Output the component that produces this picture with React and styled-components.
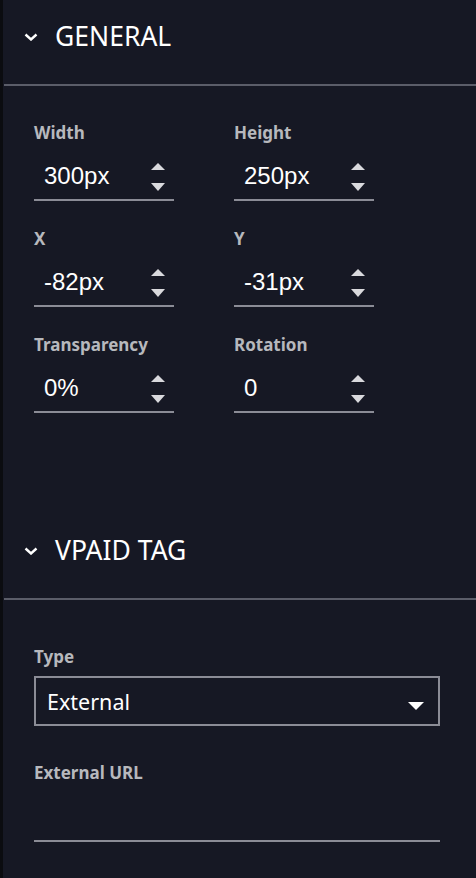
import React from 'react';
import styled, { createGlobalStyle } from 'styled-components';

const GlobalStyle = createGlobalStyle`
	html, body {
		margin: 0;
		padding: 0;
		background: #161824;
	}
	* {
		box-sizing: border-box;
	}
`;

const Panel = styled.div`
	min-height: 878px;
	width: 476px;
	background: #161824;
	border-left: 3px solid #0b0c10;
	display: flex;
	flex-direction: column;
	font-family: 'Noto Sans', 'Open Sans', sans-serif;
`;

const SectionHeader = styled.div`
	height: 72px;
	display: flex;
	align-items: center;
	padding-left: 21px;
	margin-top: ${props => props.offset || 0}px;
	margin-bottom: 12px;
	color: #ffffff;
	font-size: 26.5px;
	font-weight: 400;
`;

const Chevron = styled.svg`
	width: 14px;
	height: 8px;
	margin-right: 17px;
	margin-top: 2px;
`;

const Divider = styled.div`
	height: 2px;
	background: #5b5d69;
	margin-left: 1px;
`;

const FieldGrid = styled.div`
	display: grid;
	grid-template-columns: 140px 140px;
	column-gap: 60px;
	row-gap: 27px;
	padding: 36px 0 0 31px;
`;

const Stack = styled.div`
	display: flex;
	flex-direction: column;
	padding: ${props => props.top}px 36px 0 31px;
`;

const Label = styled.div`
	font-size: 17px;
	line-height: 22px;
	font-weight: 700;
	color: #b7b8bd;
	margin-top: ${props => props.gap || 0}px;
`;

const InputRow = styled.div`
	display: flex;
	align-items: flex-start;
	justify-content: space-between;
	margin-top: 18px;
	padding: 0 9px 9px 10px;
	border-bottom: 2px solid #8b8c96;
	height: 39px;
`;

const Value = styled.div`
	font-family: 'Liberation Sans', Arial, sans-serif;
	font-size: 24px;
	line-height: 28px;
	color: #ffffff;
`;

const Spinner = styled.div`
	display: flex;
	flex-direction: column;
	gap: 13px;
	padding-top: 1px;
`;

const Arrow = styled.div`
	width: 0;
	height: 0;
	border-left: 7px solid transparent;
	border-right: 7px solid transparent;
	${props =>
		props.down
			? `border-top: 8px solid #d9d9dd;`
			: `border-bottom: 7px solid #d9d9dd;`}
`;

const Select = styled.div`
	margin-top: 8px;
	height: 50px;
	border: 2px solid #8b8c96;
	display: flex;
	align-items: flex-start;
	justify-content: space-between;
	padding: 8px 14px 0 11px;
`;

const SelectText = styled.div`
	font-size: 21.5px;
	line-height: 32px;
	color: #ffffff;
`;

const Caret = styled.div`
	margin-top: 16px;
	width: 0;
	height: 0;
	border-left: 8px solid transparent;
	border-right: 8px solid transparent;
	border-top: 8px solid #ffffff;
`;

const UrlInput = styled.div`
	height: 58px;
	border-bottom: 2px solid #8b8c96;
`;

const fields = [
	{ label: 'Width', value: '300px' },
	{ label: 'Height', value: '250px' },
	{ label: 'X', value: '-82px' },
	{ label: 'Y', value: '-31px' },
	{ label: 'Transparency', value: '0%' },
	{ label: 'Rotation', value: '0' },
];

const Header = ({ title, offset }) => (
	<>
		<SectionHeader offset={offset}>
			<Chevron viewBox="0 0 14 8">
				<polyline points="1.5,1.5 7,6.5 12.5,1.5" fill="none" stroke="#ffffff" strokeWidth="2.4" />
			</Chevron>
			{title}
		</SectionHeader>
		<Divider />
	</>
);

const NumberField = ({ label, value }) => (
	<div>
		<Label>{label}</Label>
		<InputRow>
			<Value>{value}</Value>
			<Spinner>
				<Arrow />
				<Arrow down />
			</Spinner>
		</InputRow>
	</div>
);

const App = () => {
	return (
		<>
			<GlobalStyle />
			<Panel>
				<Header title="GENERAL" />
				<FieldGrid>
					{fields.map(f => (
						<NumberField key={f.label} label={f.label} value={f.value} />
					))}
				</FieldGrid>
				<Header title="VPAID TAG" offset={101} />
				<Stack top={46}>
					<Label>Type</Label>
					<Select>
						<SelectText>External</SelectText>
						<Caret />
					</Select>
					<Label gap={36}>External URL</Label>
					<UrlInput />
				</Stack>
			</Panel>
		</>
	);
};

export default App;
